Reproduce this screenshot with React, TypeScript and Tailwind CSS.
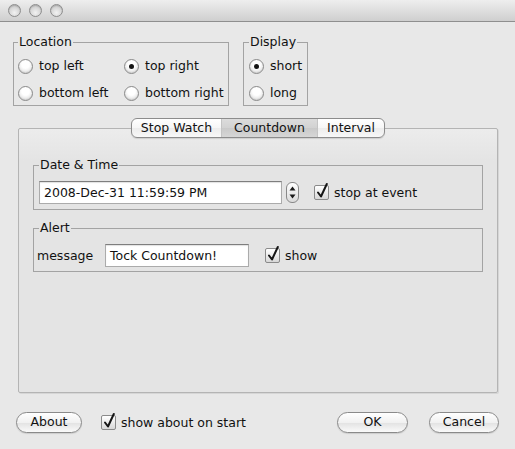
import React from "react";

const Radio = ({ checked }: { checked?: boolean }) => (
  <span className="flex h-[15px] w-[15px] shrink-0 items-center justify-center rounded-full border border-[#8a8a8a] bg-[radial-gradient(circle_at_50%_35%,#ffffff_35%,#d2d2d2_100%)] shadow-[inset_0_-1px_1px_rgba(0,0,0,0.08)]">
    {checked && <span className="h-[5px] w-[5px] rounded-full bg-[#141414]" />}
  </span>
);

const RadioItem = ({ label, checked }: { label: string; checked?: boolean }) => (
  <div className="flex h-[22px] items-center gap-[6px]">
    <Radio checked={checked} />
    <span>{label}</span>
  </div>
);

const Check = () => (
  <span className="relative h-[15px] w-[15px] shrink-0 rounded-[2px] border border-[#8a8a8a] bg-gradient-to-b from-white to-[#d8d8d8]">
    <svg
      className="absolute left-0 top-[-4px] overflow-visible"
      width="15"
      height="17"
      viewBox="0 0 15 17"
    >
      <path
        d="M3 10.5 L6 14.5 L11.8 2"
        fill="none"
        stroke="#151515"
        strokeWidth="2"
        strokeLinecap="round"
        strokeLinejoin="round"
      />
    </svg>
  </span>
);

const Light = () => (
  <span className="h-[13px] w-[13px] rounded-full border border-[#8d8d8d] bg-[radial-gradient(circle_at_50%_70%,#f2f2f2_0%,#d6d6d6_55%,#b9b9b9_100%)] shadow-[inset_0_1px_1px_rgba(0,0,0,0.15)]" />
);

const PillButton = ({ label, w }: { label: string; w: string }) => (
  <button
    className={`flex h-[21px] ${w} items-center justify-center rounded-full border border-[#8a8a8a] bg-[linear-gradient(#ffffff,#f1f1f1_50%,#e2e2e2_51%,#fafafa)] text-[#111] shadow-[0_1px_1px_rgba(0,0,0,0.12)]`}
  >
    {label}
  </button>
);

export default function App() {
  return (
    <div className="flex h-[449px] w-[515px] flex-col overflow-hidden bg-[#e8e8e8] font-['DejaVu_Sans',sans-serif] text-[12.5px] text-[#111]">
      {/* title bar */}
      <div className="flex h-[22px] shrink-0 items-center gap-[8px] border-b border-[#8f8f8f] bg-gradient-to-b from-[#eeeeee] to-[#cfcfcf] pl-[8px]">
        <Light />
        <Light />
        <Light />
      </div>

      {/* top fieldsets */}
      <div className="mt-[12px] flex gap-[14px] pl-[13px]">
        <fieldset className="w-[216px] border border-[#a3a3a3] px-[4px] pb-[1px] pt-[5px]">
          <legend className="px-[1px] leading-[16px]">Location</legend>
          <div className="grid grid-cols-[106px_1fr] gap-y-[5px]">
            <RadioItem label="top left" />
            <RadioItem label="top right" checked />
            <RadioItem label="bottom left" />
            <RadioItem label="bottom right" />
          </div>
        </fieldset>
        <fieldset className="w-[65px] border border-[#a3a3a3] pl-[5px] pb-[1px] pt-[5px]">
          <legend className="px-[1px] leading-[16px]">Display</legend>
          <div className="flex flex-col gap-y-[5px]">
            <RadioItem label="short" checked />
            <RadioItem label="long" />
          </div>
        </fieldset>
      </div>

      {/* tabbed pane */}
      <div className="ml-[18px] mt-[12px] flex w-[480px] flex-col">
        <div className="relative z-10 flex h-[20px] justify-center">
          <div className="flex h-[20px] overflow-hidden rounded-[6px] border border-[#8c8c8c] bg-[linear-gradient(#ffffff,#f6f6f6_50%,#ececec_51%,#f8f8f8)] shadow-[0_1px_1px_rgba(0,0,0,0.12)]">
            <div className="flex w-[89px] items-center justify-center">Stop Watch</div>
            <div className="flex w-[97px] items-center justify-center border-x border-[#c4c4c4] bg-[linear-gradient(#dcdcdc,#d2d2d2_50%,#c9c9c9_51%,#d6d6d6)]">
              Countdown
            </div>
            <div className="flex w-[66px] items-center justify-center">Interval</div>
          </div>
        </div>
        <div className="-mt-[10px] h-[265px] rounded-[2px] border border-[#b4b4b4] bg-[linear-gradient(#ececec,#e4e4e4_12%,#e4e4e4)] px-[14px] pt-[28px] shadow-[1px_1px_0_#d6d6d6]">
          <fieldset className="border border-[#a3a3a3] pl-[5px] pb-[5px] pt-[8px]">
            <legend className="px-[1px] leading-[16px]">Date &amp; Time</legend>
            <div className="flex items-center">
              <div className="flex h-[23px] w-[243px] items-center border border-[#ababab] border-t-[#7e7e7e] bg-white pl-[4px] pt-[1px] shadow-[inset_0_1px_1px_rgba(0,0,0,0.12)]">
                2008-Dec-31 11:59:59 PM
              </div>
              <div className="ml-[4px] flex h-[21px] w-[13px] flex-col items-center justify-between rounded-[6px] border border-[#888] bg-gradient-to-b from-white to-[#dadada] py-[3px]">
                <svg width="7" height="5" viewBox="0 0 7 5">
                  <path d="M3.5 0.5 L6.5 4.5 L0.5 4.5 Z" fill="#1a1a1a" />
                </svg>
                <svg width="7" height="5" viewBox="0 0 7 5">
                  <path d="M0.5 0.5 L6.5 0.5 L3.5 4.5 Z" fill="#1a1a1a" />
                </svg>
              </div>
              <div className="ml-[15px] flex items-center gap-[5px]">
                <Check />
                <span className="pt-[2px]">stop at event</span>
              </div>
            </div>
          </fieldset>

          <fieldset className="mt-[10px] border border-[#a3a3a3] pl-[3px] pb-[4px] pt-[8px]">
            <legend className="ml-[2px] px-[1px] leading-[16px]">Alert</legend>
            <div className="flex items-center">
              <span className="w-[68px] pt-[2px]">message</span>
              <div className="flex h-[23px] w-[144px] items-center border border-[#ababab] border-t-[#7e7e7e] bg-white pl-[4px] pt-[1px] shadow-[inset_0_1px_1px_rgba(0,0,0,0.12)]">
                Tock Countdown!
              </div>
              <div className="ml-[16px] flex items-center gap-[5px]">
                <Check />
                <span className="pt-[2px]">show</span>
              </div>
            </div>
          </fieldset>
        </div>
      </div>

      {/* bottom row */}
      <div className="mt-[19px] flex items-center pl-[16px] pr-[16px]">
        <PillButton label="About" w="w-[66px]" />
        <div className="ml-[19px] flex items-center gap-[5px]">
          <Check />
          <span className="pt-[1px]">show about on start</span>
        </div>
        <div className="ml-auto flex gap-[21px]">
          <PillButton label="OK" w="w-[71px]" />
          <PillButton label="Cancel" w="w-[70px]" />
        </div>
      </div>
    </div>
  );
}
